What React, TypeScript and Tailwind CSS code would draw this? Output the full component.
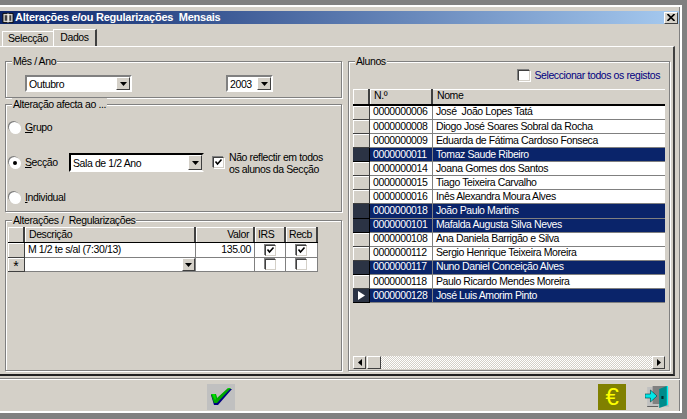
const FONT = "font-['Liberation_Sans',Arial,sans-serif]";

const raised = "border border-t-white border-l-white border-r-[#404040] border-b-[#404040]";

const ALUNOS = [
  { n: "0000000006", nome: "José  João Lopes Tatá" },
  { n: "0000000008", nome: "Diogo José Soares Sobral da Rocha" },
  { n: "0000000009", nome: "Eduarda de Fátima Cardoso Fonseca" },
  { n: "0000000011", nome: "Tomaz Saude Ribeiro", sel: true },
  { n: "0000000014", nome: "Joana Gomes dos Santos" },
  { n: "0000000015", nome: "Tiago Teixeira Carvalho" },
  { n: "0000000016", nome: "Inês Alexandra Moura Alves" },
  { n: "0000000018", nome: "João Paulo Martins", sel: true },
  { n: "0000000101", nome: "Mafalda Augusta Silva Neves", sel: true },
  { n: "0000000108", nome: "Ana Daniela Barrigão e Silva" },
  { n: "0000000112", nome: "Sergio Henrique Teixeira Moreira" },
  { n: "0000000117", nome: "Nuno Daniel Conceição Alves", sel: true },
  { n: "0000000118", nome: "Paulo Ricardo Mendes Moreira" },
  { n: "0000000128", nome: "José Luis Amorim Pinto", sel: true, current: true },
];

const Group: React.FC<
  React.PropsWithChildren<{ title: string; className?: string }>
> = ({ title, className, children }) => (
  <div
    className={`relative border border-[#808080] shadow-[inset_1px_1px_0_#fff,1px_1px_0_#fff] ${className}`}
  >
    <span className="absolute -top-[7px] left-[6px] whitespace-pre bg-[#d4d0c8] px-[1px] leading-[13px]">
      {title}
    </span>
    {children}
  </div>
);

const Arrow = () => (
  <svg width="7" height="4" viewBox="0 0 7 4">
    <path d="M0 0h7L3.5 4z" fill="#000" />
  </svg>
);

const DropButton: React.FC<{ className?: string }> = ({ className }) => (
  <div
    className={`flex items-center justify-center bg-[#d4d0c8] ${raised} ${className}`}
  >
    <Arrow />
  </div>
);

const Combo: React.FC<{ value: string; className: string; dark?: boolean }> = ({
  value,
  className,
  dark,
}) => (
  <div
    className={`flex bg-white border-2 ${
      dark
        ? "border-t-black border-l-black border-r-[#d4d0c8] border-b-white"
        : "border-t-[#808080] border-l-[#808080] border-r-white border-b-white"
    } ${className}`}
  >
    <span className="flex-1 self-center pl-[2px] leading-[14px]">{value}</span>
    <DropButton className="w-[14px]" />
  </div>
);

const Radio: React.FC<{ hot: string; rest: string; on?: boolean }> = ({
  hot,
  rest,
  on,
}) => (
  <div className="flex items-center">
    <div className="flex h-[11px] w-[11px] shrink-0 items-center justify-center rounded-full bg-white shadow-[-1px_-1px_0_#808080,1px_1px_0_#fff]">
      {on && <div className="h-[4px] w-[4px] rounded-full bg-black" />}
    </div>
    <span className="ml-[5px] w-[44px]">
      <u>{hot}</u>
      {rest}
    </span>
  </div>
);

const Check: React.FC<{ on?: boolean; className?: string }> = ({ on, className }) => (
  <div
    className={`flex h-[11px] w-[11px] shrink-0 items-center justify-center border border-t-[#404040] border-l-[#404040] border-r-[#d4d0c8] border-b-[#d4d0c8] bg-white shadow-[-1px_-1px_0_#808080,1px_1px_0_#fff] ${className}`}
  >
    {on && (
      <svg width="9" height="9" viewBox="0 0 9 9">
        <path d="M1.5 3.5 3.5 6 7.5 1.5" fill="none" stroke="#000" strokeWidth="1.6" />
      </svg>
    )}
  </div>
);

const HeaderCell: React.FC<React.PropsWithChildren<{ className?: string }>> = ({
  className,
  children,
}) => (
  <div
    className={`flex h-[15px] shrink-0 items-center border-r-2 border-r-[#404040] bg-[#d4d0c8] shadow-[inset_1px_1px_0_#fff] ${className}`}
  >
    {children}
  </div>
);

const RowHead: React.FC<React.PropsWithChildren> = ({ children }) => (
  <div className="flex w-[17px] shrink-0 items-center justify-center border-r border-b border-[#404040] bg-[#d4d0c8] shadow-[inset_1px_1px_0_#fff]">
    {children}
  </div>
);

const AlteracoesGrid = () => (
  <div className="ml-[2px] mt-[6px] w-[310px]">
    <div className="flex border-b border-black">
      <HeaderCell className="w-[17px]" />
      <HeaderCell className="w-[171px] pl-[4px]">Descrição</HeaderCell>
      <HeaderCell className="w-[59px] justify-end pr-[4px]">Valor</HeaderCell>
      <HeaderCell className="w-[31px] pl-[3px]">IRS</HeaderCell>
      <HeaderCell className="w-[32px] pl-[3px]">Recb</HeaderCell>
    </div>
    <div className="flex h-[15px]">
      <RowHead />
      <div className="flex w-[171px] items-center border-r border-b border-[#808080] bg-white pl-[3px]">
        M 1/2 te s/al (7:30/13)
      </div>
      <div className="flex w-[59px] items-center justify-end border-r border-b border-[#808080] bg-white pr-[3px]">
        135.00
      </div>
      <div className="flex w-[31px] items-center justify-center border-r border-b border-[#808080] bg-white">
        <Check on />
      </div>
      <div className="flex w-[32px] items-center justify-center border-r border-b border-[#808080] bg-white">
        <Check on />
      </div>
    </div>
    <div className="flex h-[14px]">
      <RowHead>
        <span className="pt-[3px] text-[14px] leading-[13px] tracking-normal">*</span>
      </RowHead>
      <div className="flex w-[171px] justify-end border-r border-b border-[#808080] bg-white">
        <DropButton className="w-[13px]" />
      </div>
      <div className="w-[59px] border-r border-b border-[#808080] bg-white" />
      <div className="flex w-[31px] items-center justify-center border-r border-b border-[#808080] bg-white">
        <Check />
      </div>
      <div className="flex w-[32px] items-center justify-center border-r border-b border-[#808080] bg-white">
        <Check />
      </div>
    </div>
  </div>
);

const AlunosGrid = () => (
  <div className="mx-[4px] mt-[5px] flex flex-1 flex-col">
    <div className="flex border-b-2 border-black">
      <HeaderCell className="w-[17px]" />
      <HeaderCell className="w-[63px] pl-[4px]">N.º</HeaderCell>
      <div className="flex h-[15px] flex-1 items-center bg-[#d4d0c8] pl-[4px] shadow-[inset_0_1px_0_#fff]">
        Nome
      </div>
    </div>
    {ALUNOS.map((a) => (
      <div key={a.n} className="flex h-[14.1px]">
        <div
          className={`flex w-[17px] shrink-0 items-center justify-center border-r border-b ${
            a.sel
              ? "border-black bg-[#2b3344]"
              : "border-[#404040] bg-[#d4d0c8] shadow-[inset_1px_1px_0_#fff]"
          }`}
        >
          {a.current && (
            <svg width="7" height="9" viewBox="0 0 7 9">
              <path d="M0 0l7 4.5L0 9z" fill="#fff" />
            </svg>
          )}
        </div>
        <div
          className={`flex w-[63px] shrink-0 items-center border-r border-b border-[#808080] pl-[3px] ${
            a.sel ? "bg-[#0a246a] text-white" : "bg-white"
          }`}
        >
          {a.n}
        </div>
        <div
          className={`flex flex-1 items-center whitespace-pre border-b border-[#808080] pl-[3px] ${
            a.sel ? "bg-[#0a246a] text-white" : "bg-white"
          }`}
        >
          {a.nome}
        </div>
      </div>
    ))}
    <div className="mt-auto mb-[1px] flex h-[13px]">
      <div className={`flex w-[13px] items-center justify-center bg-[#d4d0c8] ${raised}`}>
        <svg width="4" height="7" viewBox="0 0 4 7">
          <path d="M4 0v7L0 3.5z" fill="#000" />
        </svg>
      </div>
      <div className={`ml-px w-[14px] bg-[#d4d0c8] ${raised}`} />
      <div className="flex-1 bg-[repeating-conic-gradient(#fff_0_25%,#d4d0c8_0_50%)] bg-[length:2px_2px]" />
      <div className={`flex w-[13px] items-center justify-center bg-[#d4d0c8] ${raised}`}>
        <svg width="4" height="7" viewBox="0 0 4 7">
          <path d="M0 0v7l4-3.5z" fill="#000" />
        </svg>
      </div>
    </div>
  </div>
);

const TitleIcon = () => (
  <svg width="12" height="12" viewBox="0 0 13 12" className="shrink-0">
    <path d="M1 1h11v10H1z" fill="#d4d0c8" stroke="#000" />
    <path d="M3 3h3v6H3zM8 3h2v6H8z" fill="#404040" />
    <path d="M6.5 1v10" stroke="#fff" />
  </svg>
);

const TickIcon = () => (
  <div className="flex h-[26px] w-[28px] items-center justify-center bg-[#c0c0c0]">
    <svg width="22" height="20" viewBox="0 0 22 20">
      <path d="M1 8h5l1 4L18 2h4L8 18H4z" fill="#000080" />
      <path d="M1 7h5l1 4L18 1h3L7 16H4z" fill="#00a800" />
      <path d="M2 7h3l1 5-1 1zM18 1h3l-3 1z" fill="#00e000" />
    </svg>
  </div>
);

const DoorIcon = () => (
  <svg width="24" height="24" viewBox="0 0 22 24" preserveAspectRatio="none">
    <rect x="2" y="2" width="20" height="20" fill="#c0c0c0" />
    <path d="M7 1h14v18H7z" fill="#808080" />
    <path d="M13 4l7-3h1v19l-8 3z" fill="#008b8b" />
    <path d="M20 1h1v19h-1z" fill="#00ffff" />
    <rect x="15" y="11" width="2" height="3" fill="#003030" />
    <path d="M0 9h5V5l6 6-6 6v-4H0z" fill="#00e8e8" stroke="#004040" strokeWidth="0.6" />
    <path d="M2 21h10v1H2z" fill="#606060" />
  </svg>
);

export default function App() {
  return (
    <div
      className={`${FONT} flex h-[419px] w-[687px] flex-col overflow-hidden bg-[#808080] pt-[5px] pr-[5px] pb-[6px] text-[10.5px] tracking-[-0.4px] text-black`}
    >
      <div className="flex flex-1 flex-col border-t-2 border-r-2 border-b-2 border-t-white border-r-white border-b-white bg-[#d4d0c8] shadow-[inset_-1px_0_0_#808080]">
        <div className="mt-[4px] mr-[1px] flex h-[13px] items-center justify-between bg-[linear-gradient(to_right,#0a246a,#a6caf0)] pr-[1px]">
          <div className="flex items-center gap-[1px] pl-[2px] text-[11px] font-bold tracking-[-0.25px] text-white">
            <TitleIcon />
            <span className="whitespace-pre">Alterações e/ou Regularizações  Mensais</span>
          </div>
          <div className={`flex h-[12px] w-[14px] items-center justify-center bg-[#d4d0c8] ${raised}`}>
            <svg width="8" height="7" viewBox="0 0 8 7">
              <path d="M0.5 0 7.5 7M7.5 0 0.5 7" stroke="#000" strokeWidth="1.6" />
            </svg>
          </div>
        </div>

        <div className="mt-[5px] flex h-[17px] items-end pl-[2px]">
          <div className="flex h-[15px] w-[51px] items-center justify-center border-t border-l border-white">
            Selecção
          </div>
          <div className="flex h-[17px] w-[44px] items-center justify-center border-t border-l border-r-2 border-t-white border-l-white border-r-[#404040]">
            Dados
          </div>
        </div>

        <div className="mr-[5px] flex h-[330px] gap-[6px] border-t border-r-2 border-b-2 border-t-white border-r-[#404040] border-b-[#202020] pt-[14px] pb-[3px] pl-[5px]">
          <div className="flex w-[337px] flex-col">
            <Group title="Mês / Ano" className="flex h-[37px] shrink-0 items-start pt-[13px] pl-[19px]">
              <Combo value="Outubro" className="h-[17px] w-[107px]" />
              <Combo value="2003" className="ml-[94px] h-[17px] w-[47px]" />
            </Group>
            <Group title="Alteração afecta ao ..." className="mt-[6px] h-[108px] shrink-0 pt-[5px] pl-[3px]">
              <div className="flex h-[35px] items-center">
                <Radio hot="G" rest="rupo" />
              </div>
              <div className="flex h-[35px] items-center">
                <Radio hot="S" rest="ecção" on />
                <Combo value="Sala de 1/2 Ano" dark className="h-[19px] w-[135px]" />
                <Check on className="ml-[9px]" />
                <span className="ml-[5px] whitespace-nowrap leading-[12px]">
                  Não reflectir em todos
                  <br />
                  os alunos da Secção
                </span>
              </div>
              <div className="flex h-[35px] items-center">
                <Radio hot="I" rest="ndividual" />
              </div>
            </Group>
            <Group title="Alterações /  Regularizações" className="mt-[8px] flex-1">
              <AlteracoesGrid />
            </Group>
          </div>

          <Group title="Alunos" className="flex w-[322px] flex-col">
            <div className="mt-[6px] flex items-center justify-end pr-[9px]">
              <Check className="mr-[4px] h-[10px] w-[12px]" />
              <span className="text-[#000080]">Seleccionar todos os registos</span>
            </div>
            <AlunosGrid />
          </Group>
        </div>

        <div className="mt-[2px] flex flex-1 items-center border-t border-t-[#808080] pt-[3px] pr-[11px] shadow-[inset_0_1px_0_#fff]">
          <div className="ml-[207px]">
            <TickIcon />
          </div>
          <div className="ml-auto flex h-[26px] w-[28px] items-center justify-center bg-[#808000] text-[24px] leading-none text-[#ffff00]">
            €
          </div>
          <div className="ml-[19px]">
            <DoorIcon />
          </div>
        </div>
      </div>
    </div>
  );
}
